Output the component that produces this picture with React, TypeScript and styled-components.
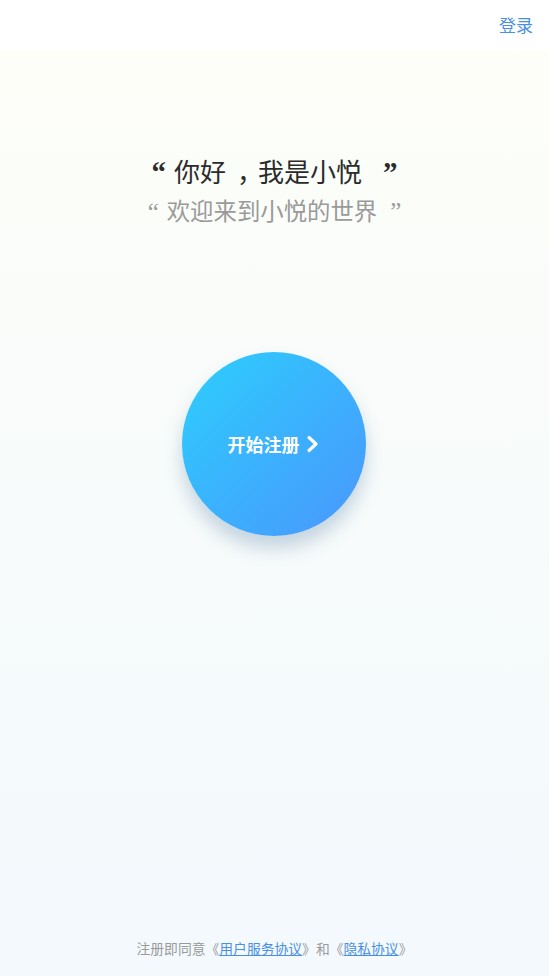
import React from "react";
import styled, { createGlobalStyle } from "styled-components";

const Global = createGlobalStyle`
  html, body { margin: 0; padding: 0; }
  body { font-family: "Noto Sans CJK SC", "Noto Sans", sans-serif; }
  * { box-sizing: border-box; }
`;

const Page = styled.div`
  width: 549px;
  height: 976px;
  display: flex;
  flex-direction: column;
  background: #ffffff;
  overflow: hidden;
`;

const Header = styled.header`
  height: 50px;
  display: flex;
  align-items: center;
  justify-content: flex-end;
  padding: 0 16px 0 0;
  background: #ffffff;
`;

const LoginLink = styled.a`
  font-size: 17px;
  color: #4a90e2;
  text-decoration: none;
  line-height: 1;
  margin-top: -2px;
`;

const Body = styled.main`
  flex: 1;
  display: flex;
  flex-direction: column;
  align-items: center;
  background: linear-gradient(180deg, #fdfef8 0%, #f7fbfb 50%, #f3f9fd 100%);
`;

const Title = styled.h1`
  margin: 104px 0 0;
  font-size: 26px;
  font-weight: 400;
  color: #2b2b2b;
  line-height: 34px;
  white-space: nowrap;
`;

const Subtitle = styled.h2`
  margin: 7px 0 0;
  font-size: 23.4px;
  font-weight: 400;
  color: #9a9a9a;
  line-height: 30px;
  white-space: nowrap;
`;

const Quote = styled.span<{ $size: number; $weight: number; $before?: number; $after?: number }>`
  font-family: "Liberation Serif", serif;
  font-weight: ${(p) => p.$weight};
  font-size: ${(p) => p.$size}px;
  line-height: 0;
  margin-left: ${(p) => p.$before ?? 0}px;
  margin-right: ${(p) => p.$after ?? 0}px;
`;

const Comma = styled.span`
  display: inline-block;
  width: 32px;
  padding-left: 11px;
  font-feature-settings: "halt";
  white-space: nowrap;
`;

const StartButton = styled.button`
  margin-top: 127px;
  width: 184px;
  height: 184px;
  border-radius: 50%;
  border: none;
  background: linear-gradient(135deg, #2dcffd 0%, #3bb2fd 50%, #4a97fd 100%);
  box-shadow: 0 12px 18px rgba(60, 110, 150, 0.28);
  display: flex;
  align-items: center;
  justify-content: center;
  gap: 6px;
  color: #ffffff;
  font-family: "Noto Sans CJK SC", sans-serif;
  font-size: 18px;
  font-weight: 700;
  cursor: pointer;
  padding: 0;
  margin-left: -2px;
`;

const Spacer = styled.div`
  flex: 1;
`;

const Footer = styled.footer`
  padding-bottom: 18px;
  font-size: 13.8px;
  color: #9a9a9a;
  line-height: 20px;
`;

const Agreement = styled.a`
  color: #4a90e2;
  text-decoration: underline;
`;

export default function App() {
  return (
    <>
      <Global />
      <Page>
        <Header>
          <LoginLink href="#">登录</LoginLink>
        </Header>
        <Body>
          <Title>
            <Quote $size={29} $weight={700} $after={8}>“</Quote>你好<Comma>，</Comma>我是小悦<Quote $size={29} $weight={700} $before={21}>”</Quote>
          </Title>
          <Subtitle>
            <Quote $size={25} $weight={400} $after={8}>“</Quote>欢迎来到小悦的世界<Quote $size={25} $weight={400} $before={13}>”</Quote>
          </Subtitle>
          <StartButton>
            开始注册
            <svg width="14" height="18" viewBox="0 0 14 18">
              <path d="M3 2.5 L10 9 L3 15.5" fill="none" stroke="#fff" strokeWidth="3.2" strokeLinecap="round" strokeLinejoin="round" />
            </svg>
          </StartButton>
          <Spacer />
          <Footer>
            注册即同意《<Agreement href="#">用户服务协议</Agreement>》和《<Agreement href="#">隐私协议</Agreement>》
          </Footer>
        </Body>
      </Page>
    </>
  );
}
